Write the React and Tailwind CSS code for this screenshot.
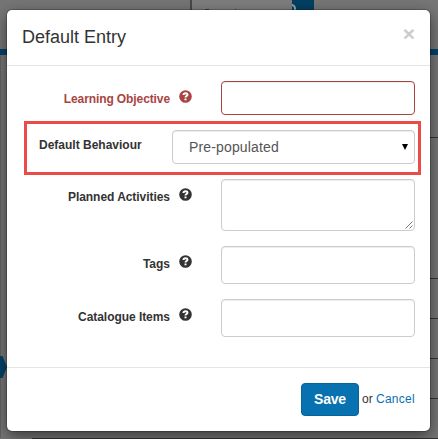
import React from "react";

function HelpIcon() {
  return (
    <svg viewBox="0 0 13 13" className="ml-[9px] h-[13px] w-[13px] shrink-0">
      <circle cx="6.5" cy="6.5" r="6.3" fill="currentColor" />
      <path d="M4.4 5C4.5 3.700 5.300 3.200 6.500 3.200c1.200 0 2 .6 2 1.500 0 1.400-2 1.300-2 2.800" fill="none" stroke="white" strokeWidth="1.900" />
      <rect x="5.500" y="8.500" width="2" height="1.800" fill="white" />
    </svg>
  );
}

function Row({ label, tone = "text-[#333333]", spacing = "", className = "", children }) {
  return (
    <div className={`flex items-start pr-[15px] ${className}`}>
      <div className={`flex w-[185px] justify-end pt-[9px] ${tone}`}>
        <span className={`mt-px whitespace-nowrap text-xs leading-4 font-bold ${spacing}`}>{label}</span>
        <HelpIcon />
      </div>
      <div className="ml-auto w-[194px]">{children}</div>
    </div>
  );
}

const field = "block w-full rounded border border-[#cccccc] bg-white shadow-[inset_0_1px_1px_rgba(0,0,0,0.075)]";

function Backdrop() {
  return (
    <div className="flex h-full flex-col bg-[#767676]">
      <div className="flex h-[49px] shrink-0">
        <div className="w-[190px] bg-[#757575]" />
        <div className="w-[2px] bg-[#484848]" />
        <div className="w-[100px] bg-[#7e7e7e]">
          <div className="flex pt-[9px] pl-[13px]">
            <div className="h-px w-[4px] bg-[#444444]" />
            <div className="ml-[26px] h-px w-px bg-[#444444]" />
          </div>
        </div>
        <div className="h-[10px] w-[22px] overflow-hidden bg-[#043f62]">
          <div className="-ml-[5px] mt-[4px] h-[10px] w-[9px] rounded-full border-2 border-[#91a0a9]" />
        </div>
      </div>
      <div className="h-[6px] shrink-0 bg-[#044268]" />
      <div className="flex min-h-0 flex-1">
        <div className="w-[7px] border-l border-[#626262] pt-[301px]">
          <svg viewBox="0 0 7 22" className="-ml-px h-[22px] w-[7px]">
            <path d="M0 0h2.500L7 11 2.500 22H0z" fill="#044268" />
          </svg>
        </div>
        <div className="ml-auto flex w-[8px] flex-col">
          <div className="h-[83px] border-b border-[#333333]" />
          <div className="h-[141px] border-b border-[#333333]" />
          <div className="h-[40px] border-b border-[#333333]" />
          <div className="h-[40px] border-b border-[#333333]" />
          <div className="h-[40px] border-b border-[#333333]" />
        </div>
      </div>
      <div className="ml-8 h-px shrink-0 bg-[#333333]" />
    </div>
  );
}

export default function App() {
  return (
    <div className="relative h-[439px] w-[438px] overflow-hidden font-['Liberation_Sans',Arial,sans-serif] text-[#333333]">
      <Backdrop />
      <div className="absolute top-[10px] left-[7px] flex h-[421px] w-[423px] flex-col rounded-[5px] bg-white shadow-[0_5px_15px_rgba(0,0,0,0.5),0_0_0_1px_rgba(0,0,0,0.2)]">
        <header className="flex h-[56px] shrink-0 items-start justify-between border-b border-[#e5e5e5] pr-[15px] pl-[15px]">
          <h4 className="mt-[14px] text-[18px] leading-[26px] font-normal">Default Entry</h4>
          <button type="button" aria-label="Close" className="mt-[13px] text-[21px] leading-[21px] font-bold text-[#cccccc]">×</button>
        </header>
        <main className="flex h-[301px] shrink-0 flex-col pt-[15px]">
          <Row label="Learning Objective" tone="text-[#a94442]" spacing="tracking-[-0.1px]">
            <input className="block h-[34px] w-full rounded border border-[#a94442] bg-white shadow-[inset_0_1px_1px_rgba(0,0,0,0.075)]" />
          </Row>
          <div className="mt-[6px] ml-[17px] flex h-[54px] w-[397px] items-start border-[3px] border-[#ec4c48] pt-[6px] pr-[3px]">
            <span className="mt-[7px] ml-[12px] text-xs leading-4 font-bold whitespace-nowrap">Default Behaviour</span>
            <div className="ml-auto flex h-[34px] w-[243px] items-center justify-between rounded border border-[#cccccc] pr-[6px] pl-4 text-[14px] tracking-[0.15px] text-[#555555] shadow-[inset_0_1px_1px_rgba(0,0,0,0.075)]">
              <span>Pre-populated</span>
              <svg viewBox="0 0 6 6" className="h-[6px] w-[6px]">
                <path d="M0 0h6L3 6z" fill="black" />
              </svg>
            </div>
          </div>
          <Row label="Planned Activities" spacing="tracking-[-0.05px]" className="mt-[4px]">
            <div className={`${field} flex h-[52px] items-end justify-end p-px`}>
              <svg viewBox="0 0 8 8" className="ml-auto mt-[41px] h-[8px] w-[8px]" stroke="#666666" strokeWidth="0.9">
                <path d="M0.500 7.500l7-7M4.500 7.500l3-3" />
              </svg>
            </div>
          </Row>
          <Row label="Tags" className="mt-[15px]">
            <div className={`${field} h-[38px]`} />
          </Row>
          <Row label="Catalogue Items" spacing="tracking-[-0.05px]" className="mt-[15px]">
            <div className={`${field} h-[38px]`} />
          </Row>
        </main>
        <footer className="flex flex-1 items-start justify-end border-t border-[#e5e5e5] pt-[15px] pr-[15px] text-xs">
          <button type="button" className="h-[33px] w-[58px] rounded border border-[#07639b] bg-[#0871b0] text-[14px] font-bold tracking-[-0.2px] text-white">Save</button>
          <span className="mt-[8px] ml-[3px] w-[53px] leading-4 whitespace-nowrap">or <a href="#" className="tracking-[0.25px] text-[#0871b0]">Cancel</a></span>
        </footer>
      </div>
    </div>
  );
}
